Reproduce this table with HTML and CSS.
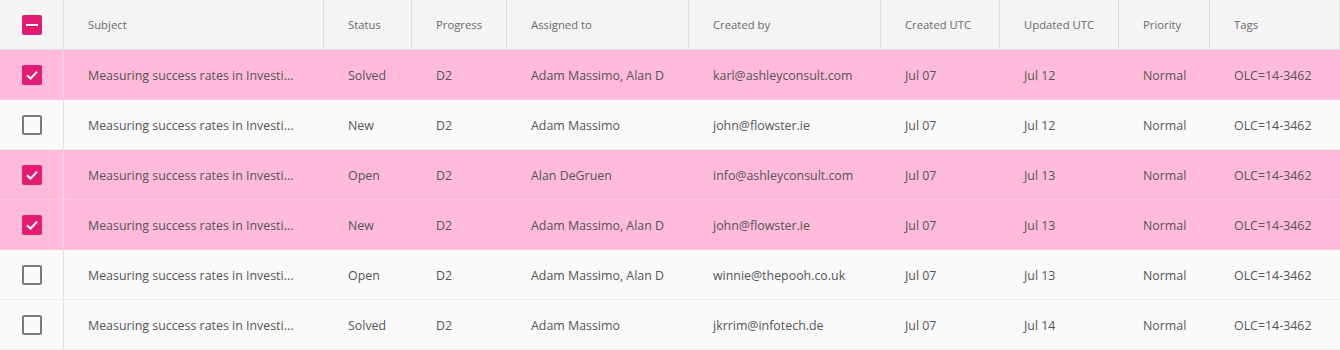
FILE: index.html
```html
<!DOCTYPE html>
<html>
<head>
<meta charset="utf-8">
<link rel="stylesheet" href="styles.css">
</head>
<body>
<div class="grid">
  <div class="row head">
    <div class="cell check"><span class="box on"><svg width="20" height="20" viewBox="0 0 20 20"><rect x="4" y="9" width="12" height="2" fill="#fff"/></svg></span></div>
    <div class="cell">Subject</div>
    <div class="cell">Status</div>
    <div class="cell">Progress</div>
    <div class="cell">Assigned to</div>
    <div class="cell">Created by</div>
    <div class="cell">Created UTC</div>
    <div class="cell">Updated UTC</div>
    <div class="cell">Priority</div>
    <div class="cell">Tags</div>
  </div>
  <div class="row sel">
    <div class="cell check"><span class="box on"><svg width="20" height="20" viewBox="0 0 20 20"><path d="M5 10.2 L8.6 13.6 L15 6.6" fill="none" stroke="#fff" stroke-width="2"/></svg></span></div>
    <div class="cell">Measuring success rates in Investi...</div>
    <div class="cell">Solved</div>
    <div class="cell">D2</div>
    <div class="cell">Adam Massimo, Alan D</div>
    <div class="cell">karl@ashleyconsult.com</div>
    <div class="cell">Jul 07</div>
    <div class="cell">Jul 12</div>
    <div class="cell">Normal</div>
    <div class="cell">OLC=14-3462</div>
  </div>
  <div class="row">
    <div class="cell check"><span class="box"></span></div>
    <div class="cell">Measuring success rates in Investi...</div>
    <div class="cell">New</div>
    <div class="cell">D2</div>
    <div class="cell">Adam Massimo</div>
    <div class="cell">john@flowster.ie</div>
    <div class="cell">Jul 07</div>
    <div class="cell">Jul 12</div>
    <div class="cell">Normal</div>
    <div class="cell">OLC=14-3462</div>
  </div>
  <div class="row sel">
    <div class="cell check"><span class="box on"><svg width="20" height="20" viewBox="0 0 20 20"><path d="M5 10.2 L8.6 13.6 L15 6.6" fill="none" stroke="#fff" stroke-width="2"/></svg></span></div>
    <div class="cell">Measuring success rates in Investi...</div>
    <div class="cell">Open</div>
    <div class="cell">D2</div>
    <div class="cell">Alan DeGruen</div>
    <div class="cell">info@ashleyconsult.com</div>
    <div class="cell">Jul 07</div>
    <div class="cell">Jul 13</div>
    <div class="cell">Normal</div>
    <div class="cell">OLC=14-3462</div>
  </div>
  <div class="row sel">
    <div class="cell check"><span class="box on"><svg width="20" height="20" viewBox="0 0 20 20"><path d="M5 10.2 L8.6 13.6 L15 6.6" fill="none" stroke="#fff" stroke-width="2"/></svg></span></div>
    <div class="cell">Measuring success rates in Investi...</div>
    <div class="cell">New</div>
    <div class="cell">D2</div>
    <div class="cell">Adam Massimo, Alan D</div>
    <div class="cell">john@flowster.ie</div>
    <div class="cell">Jul 07</div>
    <div class="cell">Jul 13</div>
    <div class="cell">Normal</div>
    <div class="cell">OLC=14-3462</div>
  </div>
  <div class="row">
    <div class="cell check"><span class="box"></span></div>
    <div class="cell">Measuring success rates in Investi...</div>
    <div class="cell">Open</div>
    <div class="cell">D2</div>
    <div class="cell">Adam Massimo, Alan D</div>
    <div class="cell">winnie@thepooh.co.uk</div>
    <div class="cell">Jul 07</div>
    <div class="cell">Jul 13</div>
    <div class="cell">Normal</div>
    <div class="cell">OLC=14-3462</div>
  </div>
  <div class="row">
    <div class="cell check"><span class="box"></span></div>
    <div class="cell">Measuring success rates in Investi...</div>
    <div class="cell">Solved</div>
    <div class="cell">D2</div>
    <div class="cell">Adam Massimo</div>
    <div class="cell">jkrrim@infotech.de</div>
    <div class="cell">Jul 07</div>
    <div class="cell">Jul 14</div>
    <div class="cell">Normal</div>
    <div class="cell">OLC=14-3462</div>
  </div>
</div>
</body>
</html>
```
FILE: styles.css
```css
html, body {
  margin: 0;
  padding: 0;
  background: #fafafa;
}
.grid {
  width: 1340px;
  font-family: "Open Sans", "Liberation Sans", sans-serif;
  color: #555555;
}
.row {
  display: grid;
  grid-template-columns: 64px 260px 88px 95px 182px 192px 119px 119px 91px 130px;
  height: 50px;
  box-sizing: border-box;
  border-bottom: 1px solid #ececec;
  background: #fafafa;
  font-size: 12.4px;
}
.row.sel {
  background: #ffbbd9;
  border-bottom-color: #fcc7df;
}
.row.head {
  background: #f4f4f4;
  border-bottom: 1px solid #e0e0e0;
  font-size: 11.3px;
  color: #6a6a6a;
}
.cell {
  display: flex;
  align-items: center;
  padding-left: 24px;
  padding-top: 2px;
  white-space: nowrap;
  overflow: hidden;
}
.head .cell {
  border-right: 1px solid #dddddd;
  padding-top: 0;
}
.cell.check {
  padding-left: 0;
  padding-top: 0;
  justify-content: center;
  border-right: 1px solid #e0e0e0;
}
.box {
  width: 20px;
  height: 20px;
  box-sizing: border-box;
  border: 2px solid #7a7a7a;
  border-radius: 2px;
  display: block;
  margin-left: 1px;
}
.box.on {
  border: none;
  background: #e21c73;
}
.box svg {
  display: block;
}
```
